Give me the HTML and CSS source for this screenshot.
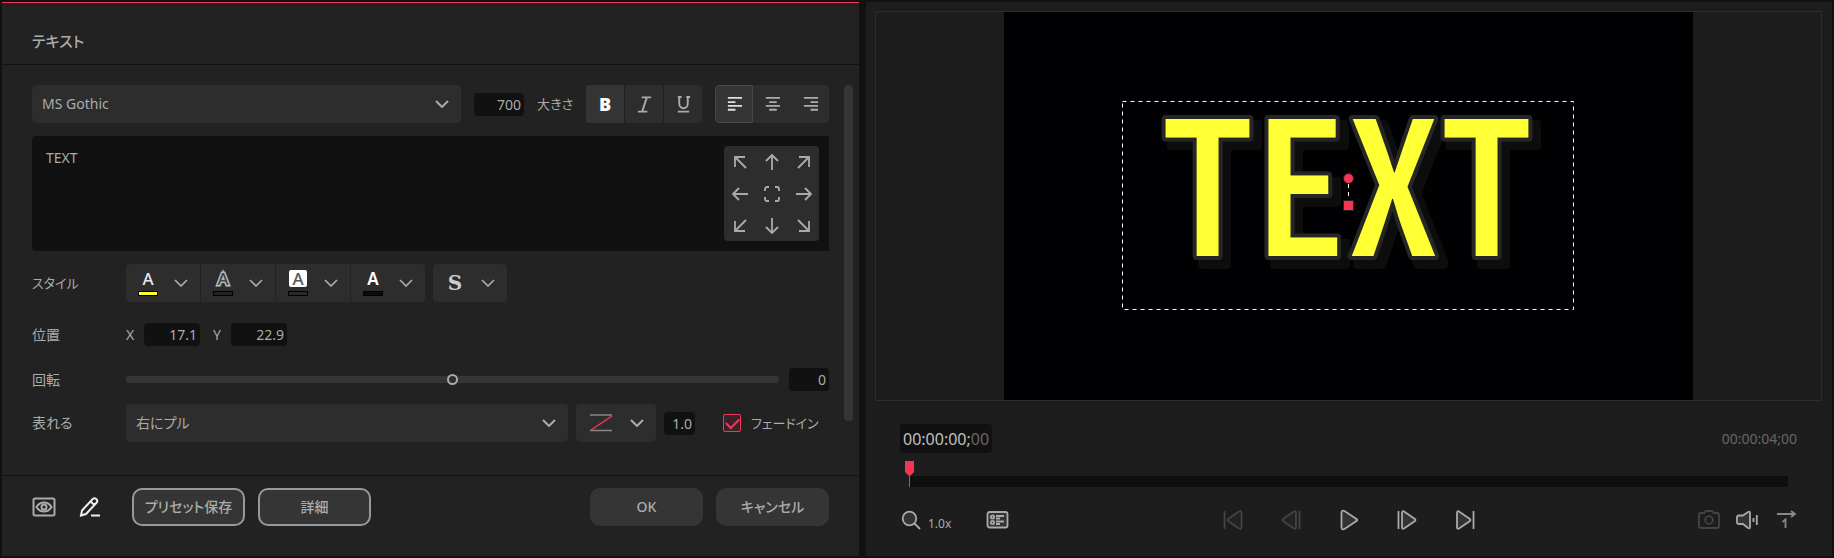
FILE: index.html
```html
<!DOCTYPE html>
<html lang="ja">
<head>
<meta charset="utf-8">
<title>テキスト</title>
<link rel="stylesheet" href="styles.css">
</head>
<body>
<svg class="defs" aria-hidden="true">
  <symbol id="chevron" viewBox="0 0 14 8"><path d="M1 1l6 6 6-6"/></symbol>
  <symbol id="arrow-up" viewBox="0 0 18 18"><path d="M9 17V2M3 8l6-6 6 6"/></symbol>
  <symbol id="arrow-diag" viewBox="0 0 18 18"><path d="M15 15L4 4M4 14V4h10"/></symbol>
</svg>
<div class="app">
  <main class="panel editor">
    <header class="editor-head"><h1>テキスト</h1></header>
    <div class="editor-body">
      <form class="fields" id="fields">
        <div class="row font-row">
          <div class="select-wrap grow">
            <select aria-label="フォント"><option>MS Gothic</option></select>
            <svg class="chev"><use href="#chevron"/></svg>
          </div>
          <input class="num w50" id="size" type="text" value="700">
          <label class="size-label" for="size">大きさ</label>
          <div class="group">
            <button type="button" class="tool on bold">B</button>
            <button type="button" class="tool italic" aria-label="斜体"><svg class="ico" viewBox="0 0 18 18"><path d="M6 1.500h10M2 16.500h10M11.500 1.500l-5 15"/></svg></button>
            <button type="button" class="tool" aria-label="下線"><svg class="ico" viewBox="0 0 18 18"><path d="M3 1h4M12 1h4M4.500 1v7a4.500 5 0 0 0 9 0V1M3 16.500h12"/></svg></button>
          </div>
          <div class="group joined">
            <button type="button" class="tool sel" aria-label="左揃え"><svg class="ico" viewBox="0 0 18 18"><path d="M2 2h15M2 6.500h8M2 10.500h15M2 14.500h8"/></svg></button>
            <button type="button" class="tool" aria-label="中央揃え"><svg class="ico" viewBox="0 0 18 18"><path d="M2 2h15M5.500 6.500h8M2 10.500h15M5.500 14.500h8"/></svg></button>
            <button type="button" class="tool" aria-label="右揃え"><svg class="ico" viewBox="0 0 18 18"><path d="M2 2h15M9 6.500h8M2 10.500h15M9 14.500h8"/></svg></button>
          </div>
        </div>

        <div class="text-box">
          <textarea aria-label="テキスト">TEXT</textarea>
          <div class="pad">
            <button type="button" aria-label="左上"><svg class="ico"><use href="#arrow-diag"/></svg></button>
            <button type="button" aria-label="上"><svg class="ico"><use href="#arrow-up"/></svg></button>
            <button type="button" aria-label="右上"><svg class="ico r90"><use href="#arrow-diag"/></svg></button>
            <button type="button" aria-label="左"><svg class="ico r270"><use href="#arrow-up"/></svg></button>
            <button type="button" aria-label="中央"><svg class="ico" viewBox="0 0 18 18"><path d="M2 6V4a2 2 0 0 1 2-2h2M12 2h2a2 2 0 0 1 2 2v2M16 12v2a2 2 0 0 1-2 2h-2M6 16H4a2 2 0 0 1-2-2v-2"/></svg></button>
            <button type="button" aria-label="右"><svg class="ico r90"><use href="#arrow-up"/></svg></button>
            <button type="button" aria-label="左下"><svg class="ico r270"><use href="#arrow-diag"/></svg></button>
            <button type="button" aria-label="下"><svg class="ico r180"><use href="#arrow-up"/></svg></button>
            <button type="button" aria-label="右下"><svg class="ico r180"><use href="#arrow-diag"/></svg></button>
          </div>
        </div>

        <div class="row style-row">
          <span class="label kana">スタイル</span>
          <div class="group">
            <button type="button" class="style-btn"><span class="glyph"><span class="letter">A</span><span class="swatch yellow"></span></span><svg class="chev"><use href="#chevron"/></svg></button>
            <button type="button" class="style-btn"><span class="glyph"><span class="letter outline">A</span><span class="swatch gray"></span></span><svg class="chev"><use href="#chevron"/></svg></button>
            <button type="button" class="style-btn"><span class="glyph"><span class="letter boxed">A</span><span class="swatch slate"></span></span><svg class="chev"><use href="#chevron"/></svg></button>
            <button type="button" class="style-btn"><span class="glyph"><span class="letter strong">A</span><span class="swatch black"></span></span><svg class="chev"><use href="#chevron"/></svg></button>
          </div>
          <div class="group">
            <button type="button" class="style-btn"><span class="glyph serif">S</span><svg class="chev"><use href="#chevron"/></svg></button>
          </div>
        </div>

        <div class="row pos-row">
          <span class="label">位置</span>
          <label class="axis" for="px">X</label><input class="num w56" id="px" type="text" value="17.1">
          <label class="axis second" for="py">Y</label><input class="num w56" id="py" type="text" value="22.9">
        </div>

        <div class="row rot-row">
          <label class="label" for="rot">回転</label>
          <input class="slider" id="rot" type="range" min="-180" max="180" value="0">
          <input class="num w40" type="text" value="0" aria-label="回転角度">
        </div>

        <div class="row in-row">
          <label class="label" for="anim">表れる</label>
          <div class="select-wrap grow">
            <select id="anim"><option>右にプル</option></select>
            <svg class="chev"><use href="#chevron"/></svg>
          </div>
          <button type="button" class="curve" aria-label="カーブ">
            <svg class="curve-ico" viewBox="0 0 23 18"><path class="edge" d="M0 1h22M0 16.500h22"/><path class="accent" d="M1 16L22 2"/></svg>
            <svg class="chev"><use href="#chevron"/></svg>
          </button>
          <input class="num w31" type="text" value="1.0" aria-label="時間">
          <label class="check kana"><input type="checkbox" checked>フェードイン</label>
        </div>
      </form>
      <div class="scrollbar"></div>
    </div>
    <footer class="editor-foot">
      <button type="button" class="icon-btn" aria-label="表示"><svg viewBox="0 0 24 20"><rect x="1.500" y="1.500" width="21" height="17" rx="1.500"/><path d="M4.500 10C8 4 16 4 19.500 10C16 16 8 16 4.500 10z"/><circle cx="12" cy="10" r="2.500"/></svg></button>
      <button type="button" class="icon-btn bright" aria-label="編集"><svg viewBox="0 0 24 20"><path d="M3 18.500l1-5L14.500 2.300a2.600 2.600 0 0 1 4 3.500L8 17l-5 1.500zM12.500 4.500l4 3.500M13 18.500h9"/></svg></button>
      <button type="button" class="btn ringed preset">プリセット保存</button>
      <button type="button" class="btn ringed">詳細</button>
      <span class="spacer"></span>
      <button type="button" class="btn">OK</button>
      <button type="button" class="btn">キャンセル</button>
    </footer>
  </main>

  <section class="panel player">
    <div class="stage">
      <svg class="canvas" viewBox="0 0 689 388">
        <filter id="cast" x="-10%" y="-10%" width="120%" height="120%">
          <feMorphology in="SourceAlpha" operator="dilate" radius="2"/>
          <feOffset dx="7" dy="7" result="shape"/>
          <feFlood flood-color="#0b0b0b"/>
          <feComposite in2="shape" operator="in"/>
          <feMerge><feMergeNode/><feMergeNode in="SourceGraphic"/></feMerge>
        </filter>
        <rect width="689" height="388" fill="#010002"/>
        <text class="title" x="157" y="244" filter="url(#cast)">TEXT</text>
        <rect class="bounds" x="118.500" y="89.500" width="451" height="208"/>
        <path class="bounds" d="M344.500 172v16"/>
        <circle class="handle" cx="344.500" cy="166.500" r="5"/>
        <rect class="handle" x="339.500" y="188.500" width="10" height="10"/>
      </svg>
    </div>
    <div class="times">
      <div class="now">00:00:00;<span>00</span></div>
      <div class="total">00:00:04;00</div>
    </div>
    <div class="timeline">
      <div class="track"></div>
      <svg class="marker" viewBox="0 0 9 26"><path d="M0 0h9v11l-4 4-1 0-4-4z"/><path d="M4 14h1v12H4z"/></svg>
    </div>
    <div class="controls">
      <div class="side">
        <button type="button" class="ctl" aria-label="拡大"><svg viewBox="0 0 24 24"><circle class="tint" cx="9.500" cy="10.500" r="6.800"/><path d="M14.500 15.500l5.500 5.500"/></svg></button>
        <span class="zoom">1.0x</span>
        <button type="button" class="ctl" aria-label="設定"><svg viewBox="0 0 24 24"><rect class="tint" x="2.500" y="4" width="20" height="15.500" rx="2"/><circle cx="7.500" cy="9" r="1.600"/><circle cx="7.500" cy="14.500" r="1.600"/><path d="M11 8h8M11 10.500h4M11 13.500h8M11 16h4"/></svg></button>
      </div>
      <div class="transport">
        <button type="button" class="ctl" disabled aria-label="先頭へ"><svg viewBox="0 0 24 24"><path d="M3.500 3v18"/><path class="tint" d="M7 11l11-7.500q2.500-1 2.500 1.500v14q0 2.500-2.500 1.500L7 13q-1-1 0-2z"/></svg></button>
        <button type="button" class="ctl" disabled aria-label="前のフレーム"><svg viewBox="0 0 24 24"><path d="M20.500 3v18"/><path class="tint" d="M4 11l11-7.500q2-1 2 1.500v14q0 2.500-2 1.500L4 13q-1-1 0-2z"/></svg></button>
        <button type="button" class="ctl" aria-label="再生"><svg viewBox="0 0 24 24"><path class="tint" d="M4.500 5q0-3.500 3-2l12 8q1.500 1 0 2l-12 8q-3 1.500-3-2z"/></svg></button>
        <button type="button" class="ctl" aria-label="次のフレーム"><svg viewBox="0 0 24 24"><path d="M3.500 3v18"/><path class="tint" d="M20 11L9 3.500q-2-1-2 1.500v14q0 2.500 2 1.500L20 13q1-1 0-2z"/></svg></button>
        <button type="button" class="ctl" aria-label="末尾へ"><svg viewBox="0 0 24 24"><path d="M20.500 3v18"/><path class="tint" d="M17 11L6 3.500q-2-1-2 1.500v14q0 2.500 2 1.500L17 13q1-1 0-2z"/></svg></button>
      </div>
      <div class="side right">
        <button type="button" class="ctl" disabled aria-label="スナップショット"><svg viewBox="0 0 24 24"><path d="M4 5h3l2-2h6l2 2h3q2 0 2 2v11q0 2-2 2H4q-2 0-2-2V7q0-2 2-2z"/><circle cx="12" cy="12" r="3.800"/></svg></button>
        <button type="button" class="ctl" aria-label="音量"><svg viewBox="0 0 24 24"><path class="tint" d="M2 9q0-1.500 2-1.500h4L13 4q2-1 2 1v14q0 2-2 1l-5-4H4q-2 0-2-1.500z"/><path d="M18.500 10v4M21.800 7v10"/></svg></button>
        <button type="button" class="ctl dim last" aria-label="一回再生"><svg viewBox="0 0 24 24"><path d="M4 6h18M18 3l4 3-4 3M9.500 14l3-2.500V20"/></svg></button>
      </div>
    </div>
  </section>
</div>
</body>
</html>
```
FILE: styles.css
```css
* { box-sizing: border-box; }
body {
  margin: 0;
  background: #111;
  color: #ababab;
  font: 14px/20px "Noto Sans", "Noto Sans CJK JP", sans-serif;
  font-feature-settings: "palt";
}
button, input, select, textarea {
  font: inherit;
  font-feature-settings: inherit;
  color: inherit;
  border: 0;
  padding: 0;
  margin: 0;
  background: none;
  outline: 0;
}
svg { display: block; fill: none; stroke: currentColor; }
.defs { position: absolute; width: 0; height: 0; }

.app {
  display: grid;
  grid-template-columns: 857fr 966fr;
  gap: 7px;
  min-height: 100vh;
  padding: 2px;
}
.panel { display: flex; flex-direction: column; min-width: 0; }
.editor { background: #222; border-top: 1px solid #f23654; }
.player { background: #1d1d1d; padding: 9px 10px 0 9px; }

.editor-head {
  height: 62px;
  padding: 28px 30px 0;
  border-bottom: 1px solid #111;
}
h1 { margin: 0; font-size: 15px; line-height: 20px; font-weight: 500; }
.editor-body { display: flex; flex: 1; gap: 15px; padding: 20px 6px 33px 30px; }
.fields { flex: 1; min-width: 0; }
.scrollbar { width: 9px; margin-bottom: 21px; border-radius: 4px; background: #353535; }

.row { display: flex; align-items: center; }
.grow { flex: 1; }
.label { width: 94px; flex: none; }
.kana { font-size: 13px; }

.select-wrap { position: relative; min-width: 0; }
select {
  display: block;
  width: 100%;
  height: 38px;
  padding: 0 36px 0 10px;
  border-radius: 4px;
  background: #2d2d2d;
  appearance: none;
}
.chev { width: 14px; height: 8px; flex: none; stroke-width: 2; }
.select-wrap .chev { position: absolute; right: 12px; top: 15px; pointer-events: none; }

.num {
  height: 23px;
  padding-right: 3px;
  border-radius: 4px;
  background: #111;
  text-align: right;
  flex: none;
}
.w31 { width: 31px; }
.w40 { width: 40px; }
.w50 { width: 50px; }
.w56 { width: 56px; }

.group { display: flex; gap: 1px; border-radius: 4px; overflow: hidden; flex: none; }
.joined { gap: 0; }
.tool {
  display: grid;
  place-items: center;
  width: 38px;
  height: 38px;
  background: #2d2d2d;
}
.tool.on { background: #353535; color: #fff; }
.tool.sel { background: #353535; color: #e0e0e0; border: 1px solid #484848; border-radius: 4px 0 0 4px; }
.tool.bold { font: 900 18px/20px "Noto Sans", sans-serif; }
.ico { width: 18px; height: 18px; stroke-width: 2; }
.tool .ico { width: 17px; height: 17px; }
.r90 { transform: rotate(90deg); }
.r180 { transform: rotate(180deg); }
.r270 { transform: rotate(270deg); }
.size-label { width: 36px; flex: none; font-size: 13px; white-space: nowrap; }
.font-row { gap: 13px; }

.text-box {
  display: flex;
  margin: 13px 0;
  padding-right: 10px;
  border-radius: 4px 0 0 4px;
  background: #111;
  align-items: center;
}
textarea { flex: 1; height: 115px; padding: 12px 14px; resize: none; display: block; }
.pad {
  display: grid;
  grid-template-columns: repeat(3, 32px);
  grid-template-rows: repeat(3, 32px);
  justify-content: center;
  align-content: center;
  width: 95px;
  height: 95px;
  border-radius: 4px;
  background: #2d2d2d;
}
.pad button { display: grid; place-items: center; }
.pad .ico { stroke-width: 1.8; }

.style-row .group + .group { margin-left: 8px; }
.style-btn {
  display: flex;
  align-items: center;
  gap: 16px;
  width: 74px;
  height: 38px;
  padding-left: 12px;
  background: #2d2d2d;
}
.style-btn .chev { stroke-width: 1.7; }
.glyph { display: grid; justify-items: center; width: 20px; gap: 4px; }
.letter { height: 17px; font: 500 17px/17px "Noto Sans", sans-serif; color: #e8e8e8; }
.strong { font-weight: 600; color: #fff; }
.outline { color: #444; -webkit-text-stroke: 3px #bbb; paint-order: stroke; }
.boxed { width: 18px; border-radius: 2px; background: #fff; color: #555; }
.swatch { width: 20px; height: 5px; border: 1px solid #000; }
.yellow { background: #ffff35; }
.gray { background: #222; }
.slate { background: #282a30; }
.black { background: #0c0c0c; }
.serif { font: 700 20px/22px "DejaVu Serif", serif; color: #ccc; }

.pos-row { margin-top: 21px; }
.axis { width: 18px; }
.axis.second { margin-left: 13px; }

.rot-row { margin-top: 22px; }
.slider { flex: 1; min-width: 0; height: 13px; margin-right: 10px; appearance: none; }
.slider::-webkit-slider-runnable-track { height: 7px; border-radius: 3px; background: #353535; }
.slider::-webkit-slider-thumb {
  appearance: none;
  width: 11px;
  height: 11px;
  margin-top: -2px;
  border: 2px solid #aaa;
  border-radius: 50%;
  background: #2d2d2d;
}

.in-row { margin-top: 13px; }
.curve {
  display: flex;
  align-items: center;
  gap: 17px;
  width: 80px;
  height: 38px;
  margin: 0 8px;
  padding-left: 14px;
  border-radius: 4px;
  background: #2d2d2d;
}
.curve-ico { width: 23px; height: 18px; stroke-width: 1.5; }
.edge { stroke: #888; }
.accent { stroke: #f23654; }
.check { display: flex; align-items: center; gap: 10px; width: 106px; margin-left: 28px; white-space: nowrap; }
.check input {
  appearance: none;
  width: 18px;
  height: 18px;
  border: 1px solid #f23654;
  border-radius: 2px;
  background: #3a2229;
  display: grid;
  place-items: center;
  flex: none;
}
.check input:checked::before {
  content: "";
  width: 11px;
  height: 6px;
  margin-bottom: 3px;
  border: solid #f23654;
  border-width: 0 0 2px 2px;
  transform: rotate(-45deg);
}

.editor-foot {
  display: flex;
  gap: 13px;
  height: 81px;
  padding: 12px 30px 0;
  border-top: 1px solid #111;
}
.spacer { flex: 1; }
.btn {
  width: 113px;
  height: 38px;
  border-radius: 10px;
  background: #353535;
  font-weight: 500;
}
.ringed { border: 2px solid #999; }
.preset { margin-left: 17px; }
.icon-btn { width: 24px; height: 38px; }
.icon-btn svg { width: 24px; height: 20px; stroke-width: 2; }
.icon-btn + .icon-btn { margin-left: 9px; }
.bright { color: #eee; }

.stage {
  display: flex;
  justify-content: center;
  flex: 1;
  min-height: 0;
  border: 1px solid #2d2d2d;
}
.canvas { width: 100%; max-width: 689px; height: 388px; stroke: none; }
.title {
  font: 500 186px "Noto Sans CJK JP", sans-serif;
  font-feature-settings: "hwid";
  fill: #ffff35;
  stroke: #282828;
  stroke-width: 8px;
  stroke-linejoin: round;
  paint-order: stroke;
}
.bounds { stroke: #fff; stroke-dasharray: 4 4; }
.handle { fill: #f23654; stroke: #222; }

.times { display: flex; justify-content: space-between; padding: 23px 25px 0; }
.now {
  height: 29px;
  padding: 0 3px;
  border-radius: 4px;
  background: #111;
  font-size: 16px;
  line-height: 30px;
  color: #c0c0c0;
}
.now span { color: #666; }
.total { line-height: 29px; color: #666; }
.timeline { position: relative; padding: 23px 34px 0; }
.track { height: 11px; background: #0f0f0f; }
.marker { position: absolute; left: 30px; top: 8px; width: 9px; height: 26px; fill: #f23654; stroke: none; }

.controls {
  display: grid;
  grid-template-columns: 1fr auto 1fr;
  align-items: center;
  padding: 21px 25px 24px;
}
.side { display: flex; align-items: center; }
.zoom { width: 57px; margin-left: 4px; padding-top: 8px; font-size: 12px; line-height: 16px; }
.right { justify-content: flex-end; gap: 14px; }
.transport { display: flex; gap: 34px; }
.ctl { width: 24px; height: 24px; color: #aaa; }
.ctl svg { width: 24px; height: 24px; stroke-width: 1.8; }
.ctl:disabled { color: #444; }
.ctl.dim { color: #888; }
.tint { fill: #333; }
.ctl:disabled .tint { fill: #222; }
```
